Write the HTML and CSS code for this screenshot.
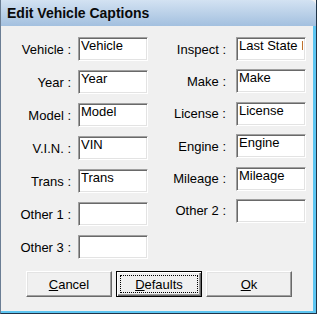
FILE: index.html
```html
<!DOCTYPE html>
<html lang="en">
<head>
  <meta charset="UTF-8">
  <title>Edit Vehicle Captions</title>
  <link rel="stylesheet" href="styles.css">
</head>
<body>
  <div class="window">
    <div class="titlebar">Edit Vehicle Captions</div>
    <div class="dialog">
      <div class="fields">
        <div class="col col-left">
          <div class="row"><label>Vehicle :</label><input type="text" value="Vehicle"></div>
          <div class="row"><label>Year :</label><input type="text" value="Year"></div>
          <div class="row"><label>Model :</label><input type="text" value="Model"></div>
          <div class="row"><label>V.I.N. :</label><input type="text" value="VIN"></div>
          <div class="row"><label>Trans :</label><input type="text" value="Trans"></div>
          <div class="row"><label>Other 1 :</label><input type="text" value=""></div>
          <div class="row"><label>Other 3 :</label><input type="text" value=""></div>
        </div>
        <div class="col col-right">
          <div class="row"><label>Inspect :</label><input type="text" value="Last State I"></div>
          <div class="row"><label>Make :</label><input type="text" value="Make"></div>
          <div class="row"><label>License :</label><input type="text" value="License"></div>
          <div class="row"><label>Engine :</label><input type="text" value="Engine"></div>
          <div class="row"><label>Mileage :</label><input type="text" value="Mileage"></div>
          <div class="row"><label>Other 2 :</label><input type="text" value=""></div>
        </div>
      </div>
      <div class="buttons">
        <button class="btn"><u>C</u>ancel</button>
        <button class="btn btn-default"><span class="focus"><u>D</u>efaults</span></button>
        <button class="btn"><u>O</u>k</button>
      </div>
    </div>
  </div>
</body>
</html>
```

FILE: styles.css
```css
* {
  margin: 0;
  padding: 0;
  box-sizing: border-box;
}

body {
  font-family: 'Liberation Sans', Arial, sans-serif;
  font-size: 13px;
  color: #000;
  background: #f0f0f0;
}

.window {
  width: 317px;
  height: 314px;
  background: #f0f0f0;
  border-left: 1px solid #6b7e94;
  border-right: 1px solid #1f3347;
  border-bottom: 1px solid #1f3347;
  display: flex;
  flex-direction: column;
}

.titlebar {
  height: 26px;
  padding: 5px 0 0 6px;
  font-size: 14px;
  font-weight: bold;
  color: #0a0a0a;
  background: linear-gradient(to bottom, #d3e2f2, #a3c0df);
  border-top-right-radius: 6px;
}

.dialog {
  flex: 1;
  padding-top: 11px;
  border-right: 3px solid #5ec6f1;
  border-bottom: 2px solid #5ec6f1;
}

.fields {
  display: flex;
}

.col {
  display: flex;
  flex-direction: column;
}

.col-left {
  width: 147px;
  gap: 9px;
}

.col-right {
  gap: 8.4px;
}

.row {
  display: flex;
  align-items: center;
  height: 24px;
}

.col-left label {
  width: 70px;
  margin-right: 7px;
}

.col-right label {
  width: 78px;
  margin-right: 10px;
}

label {
  text-align: right;
  white-space: nowrap;
}

input[type="text"] {
  width: 70px;
  height: 24px;
  padding: 0 2px 7px;
  font-family: 'Liberation Sans', Arial, sans-serif;
  font-size: 13px;
  color: #000;
  background: #fff;
  border: 1px solid;
  border-color: #a0a0a0 #fff #fff #a0a0a0;
  box-shadow: inset 1px 1px 0 #696969, inset -1px -1px 0 #e3e3e3;
  outline: none;
}

.buttons {
  display: flex;
  gap: 4px;
  margin: 12px 0 0 25px;
}

.btn {
  width: 86px;
  height: 26px;
  font-family: 'Liberation Sans', Arial, sans-serif;
  font-size: 13px;
  color: #000;
  background: #f0f0f0;
  border: 1px solid;
  border-color: #fff #696969 #696969 #fff;
  box-shadow: inset -1px -1px 0 #a0a0a0, inset 1px 1px 0 #e3e3e3;
  padding-top: 1px;
}

.btn-default {
  border: 1px solid #000;
  box-shadow: inset 1px 1px 0 #fff, inset -1px -1px 0 #696969, inset -2px -2px 0 #a0a0a0;
  padding: 3px;
}

.focus {
  display: flex;
  align-items: center;
  justify-content: center;
  height: 100%;
  border: 1px dotted #000;
}
```
